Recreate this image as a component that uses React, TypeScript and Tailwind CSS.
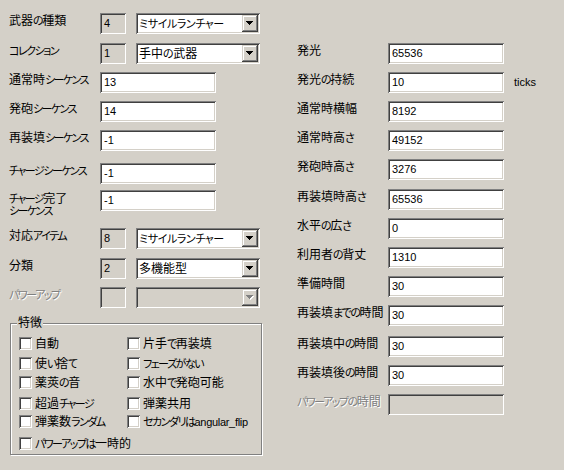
import type { ReactNode } from "react";

const sunken =
  "shadow-[inset_1px_1px_0_#808080,inset_-1px_-1px_0_#ffffff,inset_2px_2px_0_#404040,inset_-2px_-2px_0_#d4d0c8]";
const raised =
  "shadow-[inset_-1px_-1px_0_#404040,inset_1px_1px_0_#d4d0c8,inset_-2px_-2px_0_#808080,inset_2px_2px_0_#ffffff]";
const jp = "[font-family:'Liberation_Sans','Noto_Sans_CJK_JP',sans-serif] [font-feature-settings:'palt']";

// kana in the old UI font are narrower than the kanji, so tighten those runs only
function Jp({ text, loose = false }: { text: string; loose?: boolean }) {
  const parts = text.split(/([\u3040-\u30ff]+)/);
  return (
    <>
      {parts.map((p, i) =>
        i % 2 ? (
          <span key={i} className={loose ? "text-[11px] tracking-[-0.4px]" : "text-[11px] tracking-[-1.5px]"}>
            {p}
          </span>
        ) : (
          p
        )
      )}
    </>
  );
}

function Arrow({ disabled = false }: { disabled?: boolean }) {
  const d = "M0 0h7v1H0z M1 1h5v1H1z M2 2h3v1H2z M3 3h1v1H3z";
  return (
    <svg width="8" height="5" viewBox="0 0 8 5" shapeRendering="crispEdges">
      {disabled && <path d={d} fill="#ffffff" transform="translate(1 1)" />}
      <path d={d} fill={disabled ? "#808080" : "#000000"} />
    </svg>
  );
}

function Edit({ value = "", disabled = false }: { value?: string; disabled?: boolean }) {
  return (
    <div
      className={`flex h-[21px] w-[116px] shrink-0 items-center pl-[4px] text-[11px] text-black ${sunken} ${
        disabled ? "bg-[#d4d0c8]" : "bg-white"
      }`}
    >
      {value}
    </div>
  );
}

function Box({ value = "" }: { value?: string }) {
  return (
    <div className={`flex h-[21px] w-[26px] shrink-0 items-center pl-[4px] text-[11px] text-black bg-[#d4d0c8] ${sunken}`}>
      {value}
    </div>
  );
}

function Combo({ value = "", disabled = false }: { value?: string; disabled?: boolean }) {
  return (
    <div
      className={`ml-[10px] flex h-[21px] w-[124px] shrink-0 items-center p-[2px] ${sunken} ${
        disabled ? "bg-[#d4d0c8]" : "bg-white"
      }`}
    >
      <div className="flex-1 truncate pl-[1px] text-[12px] leading-[14px] text-black">
        <Jp text={value} loose />
      </div>
      <div className={`flex h-[17px] w-[16px] items-center justify-center bg-[#d4d0c8] ${raised}`}>
        <Arrow disabled={disabled} />
      </div>
    </div>
  );
}

function Row({
  label,
  className = "",
  disabled = false,
  children,
}: {
  label: ReactNode;
  className?: string;
  disabled?: boolean;
  children: ReactNode;
}) {
  return (
    <div className={`flex h-[21px] items-start ${className}`}>
      <div
        className={`w-[91px] shrink-0 whitespace-nowrap pt-[1px] text-[12px] leading-[14px] ${
          disabled ? "text-[#808080] [text-shadow:1px_1px_0_#ffffff]" : "text-black"
        }`}
      >
        {typeof label === "string" ? <Jp text={label} /> : label}
      </div>
      {children}
    </div>
  );
}

function Check({ label, extra }: { label: string; extra?: string }) {
  return (
    <div className="flex h-[13px] items-center">
      <div className={`h-[13px] w-[13px] shrink-0 bg-white ${sunken}`} />
      <span className="ml-[3px] whitespace-nowrap text-[12px] leading-[14px] text-black">
        <Jp text={label} />
        {extra && <span className="text-[11px] tracking-[-0.3px]">{extra}</span>}
      </span>
    </div>
  );
}

export default function App() {
  return (
    <div className={`flex h-[470px] w-[564px] bg-[#d4d0c8] ${jp}`}>
      <div className="flex w-[288px] flex-col pl-[9px] pt-[13px]">
        <Row label="武器の種類">
          <Box value="4" />
          <Combo value="ミサイルランチャー" />
        </Row>
        <Row label="コレクション" className="mt-[9px]">
          <Box value="1" />
          <Combo value="手中の武器" />
        </Row>
        <Row label="通常時シーケンス" className="mt-[8px]">
          <Edit value="13" />
        </Row>
        <Row label="発砲シーケンス" className="mt-[8px]">
          <Edit value="14" />
        </Row>
        <Row label="再装填シーケンス" className="mt-[8px]">
          <Edit value="-1" />
        </Row>
        <Row label="チャージシーケンス" className="mt-[12px]">
          <Edit value="-1" />
        </Row>
        <Row
          label={
            <div className="pt-[2px] leading-[12px]">
              <Jp text="チャージ完了" />
              <br />
              <Jp text="シーケンス" />
            </div>
          }
          className="mt-[6px]"
        >
          <Edit value="-1" />
        </Row>
        <Row label="対応アイテム" className="mt-[17px]">
          <Box value="8" />
          <Combo value="ミサイルランチャー" />
        </Row>
        <Row label="分類" className="mt-[9px]">
          <Box value="2" />
          <Combo value="多機能型" />
        </Row>
        <Row label="パワーアップ" className="mt-[8px]" disabled>
          <Box />
          <Combo disabled />
        </Row>

        <div className="ml-[1px] mt-[15px] h-[132px] w-[252px] border border-[#808080] shadow-[inset_1px_1px_0_#ffffff,1px_1px_0_#ffffff]">
          <div className="-mt-[8px] ml-[6px] w-fit bg-[#d4d0c8] px-[1px] text-[12px] leading-[14px] text-black">
            特徴
          </div>
          <div className="flex flex-col pl-[8px]">
            <div className="mt-[7px] grid grid-cols-[108px_1fr]">
              <Check label="自動" />
              <Check label="片手で再装填" />
            </div>
            <div className="mt-[7px] grid grid-cols-[108px_1fr]">
              <Check label="使い捨て" />
              <Check label="フェーズがない" />
            </div>
            <div className="mt-[6px] grid grid-cols-[108px_1fr]">
              <Check label="薬莢の音" />
              <Check label="水中で発砲可能" />
            </div>
            <div className="mt-[8px] grid grid-cols-[108px_1fr]">
              <Check label="超過チャージ" />
              <Check label="弾薬共用" />
            </div>
            <div className="mt-[5px] grid grid-cols-[108px_1fr]">
              <Check label="弾薬数ランダム" />
              <Check label="セカンダリは" extra="angular_flip" />
            </div>
            <div className="mt-[9px] grid grid-cols-[108px_1fr]">
              <Check label="パワーアップは一時的" />
            </div>
          </div>
        </div>
      </div>

      <div className="flex flex-col pl-[9px] pt-[43px]">
        <Row label="発光">
          <Edit value="65536" />
        </Row>
        <Row label="発光の持続" className="mt-[8px]">
          <Edit value="10" />
          <span className="ml-[10px] pt-[3px] text-[11px] leading-[14px] text-black">ticks</span>
        </Row>
        <Row label="通常時横幅" className="mt-[8px]">
          <Edit value="8192" />
        </Row>
        <Row label="通常時高さ" className="mt-[8px]">
          <Edit value="49152" />
        </Row>
        <Row label="発砲時高さ" className="mt-[8px]">
          <Edit value="3276" />
        </Row>
        <Row label="再装填時高さ" className="mt-[9px]">
          <Edit value="65536" />
        </Row>
        <Row label="水平の広さ" className="mt-[8px]">
          <Edit value="0" />
        </Row>
        <Row label="利用者の背丈" className="mt-[8px]">
          <Edit value="1310" />
        </Row>
        <Row label="準備時間" className="mt-[8px]">
          <Edit value="30" />
        </Row>
        <Row label="再装填までの時間" className="mt-[8px]">
          <Edit value="30" />
        </Row>
        <Row label="再装填中の時間" className="mt-[10px]">
          <Edit value="30" />
        </Row>
        <Row label="再装填後の時間" className="mt-[8px]">
          <Edit value="30" />
        </Row>
        <Row label="パワーアップの時間" className="mt-[8px]" disabled>
          <Edit disabled />
        </Row>
      </div>
    </div>
  );
}
